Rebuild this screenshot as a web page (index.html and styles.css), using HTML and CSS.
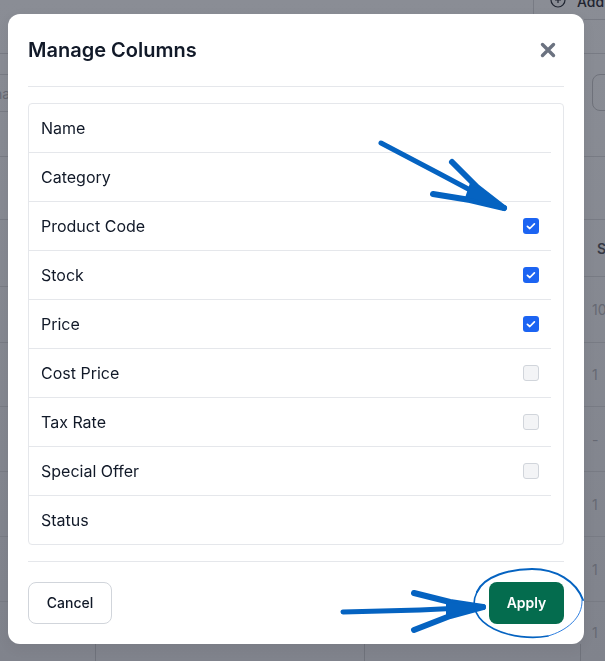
FILE: index.html
```html
<!DOCTYPE html>
<html lang="en">
<head>
<meta charset="utf-8">
<title>Manage Columns</title>
<link rel="stylesheet" href="styles.css">
</head>
<body>
<div class="page">
  <div class="bg-left">
    <div class="cell h53"></div>
    <div class="cell h21"></div>
    <div class="cell h37"><span class="faint">na</span></div>
    <div class="cell h45"></div>
    <div class="cell h63"></div>
    <div class="cell h67"></div>
    <div class="cell h56"></div>
    <div class="cell h64"></div>
    <div class="cell h65"></div>
    <div class="cell h65"></div>
    <div class="cell h65"></div>
  </div>
  <div class="bg-center">
    <div class="bg-top">
      <svg class="add-icon" viewBox="0 0 16 16" width="16" height="16"><circle cx="8" cy="8" r="7" fill="none" stroke="#1f2430" stroke-width="1.2"/><path d="M8 5v6M5 8h6" stroke="#1f2430" stroke-width="1.2"/></svg>
      <span class="add-text">Add</span>
    </div>
    <div class="bg-bottom"><i class="v v1"></i><i class="v v2"></i><i class="v v3"></i></div>
  </div>
  <div class="bg-right">
    <div class="rcell r19"></div>
    <div class="rcell r34"></div>
    <div class="rcell r103"><span class="ghost-btn"></span></div>
    <div class="rcell r63"></div>
    <div class="rcell r57 head">S</div>
    <div class="rcell r66 faint">10</div>
    <div class="rcell r64 faint">1</div>
    <div class="rcell r65 faint">-</div>
    <div class="rcell r65 faint">1</div>
    <div class="rcell r65 faint">1</div>
    <div class="rcell r60 faint">1</div>
  </div>
</div>

<div class="overlay">
  <div class="modal">
    <header class="modal-head">
      <h1 class="modal-title">Manage Columns</h1>
      <svg class="close-icon" viewBox="0 0 16 16" width="16" height="16"><path d="M2.5 2.5l11 11M13.5 2.5l-11 11" stroke="#6b7280" stroke-width="3.4" stroke-linecap="round" fill="none"/></svg>
    </header>
    <div class="col-list">
      <div class="col-row"><span>Name</span></div>
      <div class="col-row"><span>Category</span></div>
      <div class="col-row"><span>Product Code</span><span class="check on"><svg viewBox="0 0 16 16" width="16" height="16"><path d="M4.4 8.3l2.4 2.2 4.6-4.7" fill="none" stroke="#fff" stroke-width="1.7" stroke-linecap="round" stroke-linejoin="round"/></svg></span></div>
      <div class="col-row"><span>Stock</span><span class="check on"><svg viewBox="0 0 16 16" width="16" height="16"><path d="M4.4 8.3l2.4 2.2 4.6-4.7" fill="none" stroke="#fff" stroke-width="1.7" stroke-linecap="round" stroke-linejoin="round"/></svg></span></div>
      <div class="col-row"><span>Price</span><span class="check on"><svg viewBox="0 0 16 16" width="16" height="16"><path d="M4.4 8.3l2.4 2.2 4.6-4.7" fill="none" stroke="#fff" stroke-width="1.7" stroke-linecap="round" stroke-linejoin="round"/></svg></span></div>
      <div class="col-row"><span>Cost Price</span><span class="check"></span></div>
      <div class="col-row"><span>Tax Rate</span><span class="check"></span></div>
      <div class="col-row"><span>Special Offer</span><span class="check"></span></div>
      <div class="col-row"><span>Status</span></div>
    </div>
    <footer class="modal-foot">
      <button class="btn btn-cancel">Cancel</button>
      <button class="btn btn-apply">Apply</button>
    </footer>
  </div>
</div>

<svg class="marks" viewBox="0 0 605 661" width="605" height="661">
  <g fill="none" stroke="#0563c1" stroke-linecap="round" stroke-linejoin="round">
    <path d="M381 143L440 174L504 208" stroke-width="5"/>
    <path d="M452 162L477 187L504 208" stroke-width="6"/>
    <path d="M433 194L470 200L504 208" stroke-width="6"/>
    <path d="M471 183L504 208L466 198Z" fill="#0563c1" stroke-width="2"/>
    <path d="M343 612L420 610L483 607" stroke-width="5"/>
    <path d="M414 593L450 602L483 607" stroke-width="6"/>
    <path d="M414 630L450 616L483 607" stroke-width="6"/>
    <path d="M447 601L483 607L447 616Z" fill="#0563c1" stroke-width="2"/>
    <path d="M477 592C484 576 510 569 532 569C556 569 576 581 583 600" stroke-width="2"/>
    <path d="M477 592C470 606 476 620 494 629C510 637 532 639 548 636" stroke-width="1.6"/>
    <path d="M548 636C566 631 583 618 582 600" stroke-width="1" stroke="#2f7fe0"/>
  </g>
</svg>
</body>
</html>
```
FILE: styles.css
```css
* { box-sizing: border-box; }
html, body { margin: 0; padding: 0; }
body {
  width: 605px;
  height: 661px;
  overflow: hidden;
  font-family: Inter, "Liberation Sans", sans-serif;
  background: #878a93;
  color: #111928;
}

/* dimmed page behind the dialog */
.page { display: flex; width: 605px; height: 661px; overflow: hidden; background: linear-gradient(#8a8d95, #80838c); }
.bg-left { width: 8px; flex: none; overflow: hidden; }
.bg-center { width: 576px; flex: none; display: flex; flex-direction: column; justify-content: space-between; }
.bg-right { width: 21px; flex: none; overflow: hidden; }

.cell { border-bottom: 1px solid #787b84; }
.h21 { height: 21px; }
.h37 { height: 37px; display: flex; align-items: center; }
.h45 { height: 45px; }
.h53 { height: 54px; }
.h56 { height: 56px; }
.h63 { height: 63px; }
.h64 { height: 64px; }
.h65 { height: 65px; }
.h67 { height: 67px; }
.faint { color: #666973; font-size: 14px; white-space: nowrap; }
.bg-left .faint { margin-left: -6px; }

.bg-top { height: 14px; margin-left: 525px; border-left: 1px solid #787b84; display: flex; align-items: flex-end; gap: 11px; padding-left: 16px; white-space: nowrap; }
.add-icon { flex: none; margin-bottom: 6px; }
.add-text { font-size: 14px; line-height: 14px; margin-bottom: 5px; color: #1f2430; font-weight: 500; }
.bg-bottom { height: 17px; display: flex; }
.v { display: block; width: 1px; height: 17px; background: #6f727b; }
.v1 { margin-left: 87px; }
.v2 { margin-left: 268px; }
.v3 { margin-left: 215px; }

.rcell { border-bottom: 1px solid #787b84; padding-left: 13px; font-size: 14px; display: flex; align-items: center; white-space: nowrap; }
.rcell.faint { padding-left: 8px; }
.r19 { height: 20px; }
.r34 { height: 34px; }
.r103 { height: 103px; padding-left: 8px; align-items: flex-start; }
.r63 { height: 63px; }
.r57 { height: 57px; }
.r66 { height: 66px; }
.r64 { height: 64px; }
.r65 { height: 65px; }
.r60 { height: 60px; border-bottom: 0; }
.head { color: #353945; font-weight: 600; }
.ghost-btn { display: block; width: 40px; height: 37px; flex: none; margin-top: 20px; border: 1px solid #6f727b; border-radius: 8px; }

/* dialog */
.overlay { position: fixed; inset: 0; padding: 14px 21px 17px 8px; }
.modal {
  height: 630px;
  background: #fff;
  border-radius: 12px;
  padding: 0 20px 20px;
  display: flex;
  flex-direction: column;
  box-shadow: 0 4px 14px rgba(0, 0, 0, .06);
}
.modal-head { height: 73px; flex: none; display: flex; align-items: center; justify-content: space-between; border-bottom: 1px solid #e5e7eb; padding-right: 8px; padding-bottom: 1px; }
.modal-title { margin: 0; font-size: 20px; line-height: 28px; font-weight: 600; color: #111928; }
.close-icon { flex: none; }

.col-list { margin-top: 16px; border: 1px solid #e5e7eb; border-radius: 4px; padding-right: 12px; flex: none; }
.col-row { height: 49px; display: flex; align-items: center; justify-content: space-between; padding: 0 12px; border-bottom: 1px solid #e5e7eb; font-size: 16px; line-height: 24px; color: #111928; }
.col-row:last-child { height: 48px; border-bottom: 0; }
.check { width: 16px; height: 16px; flex: none; border-radius: 3px; border: 1px solid #d1d5db; background: #f3f4f6; display: block; }
.check.on { border: 0; background: #1c64f2; }
.check svg { display: block; }

.modal-foot { margin-top: 16px; padding-top: 20px; border-top: 1px solid #e5e7eb; display: flex; justify-content: space-between; }
.btn { height: 42px; border-radius: 8px; font-family: inherit; font-size: 14px; line-height: 20px; padding: 0; }
.btn-cancel { width: 84px; background: #fff; border: 1px solid #d1d5db; color: #111928; font-weight: 500; }
.btn-apply { width: 75px; background: #046c4e; border: 0; color: #fff; font-weight: 600; }

/* hand-drawn annotations */
.marks { position: fixed; left: 0; top: 0; pointer-events: none; }
```
